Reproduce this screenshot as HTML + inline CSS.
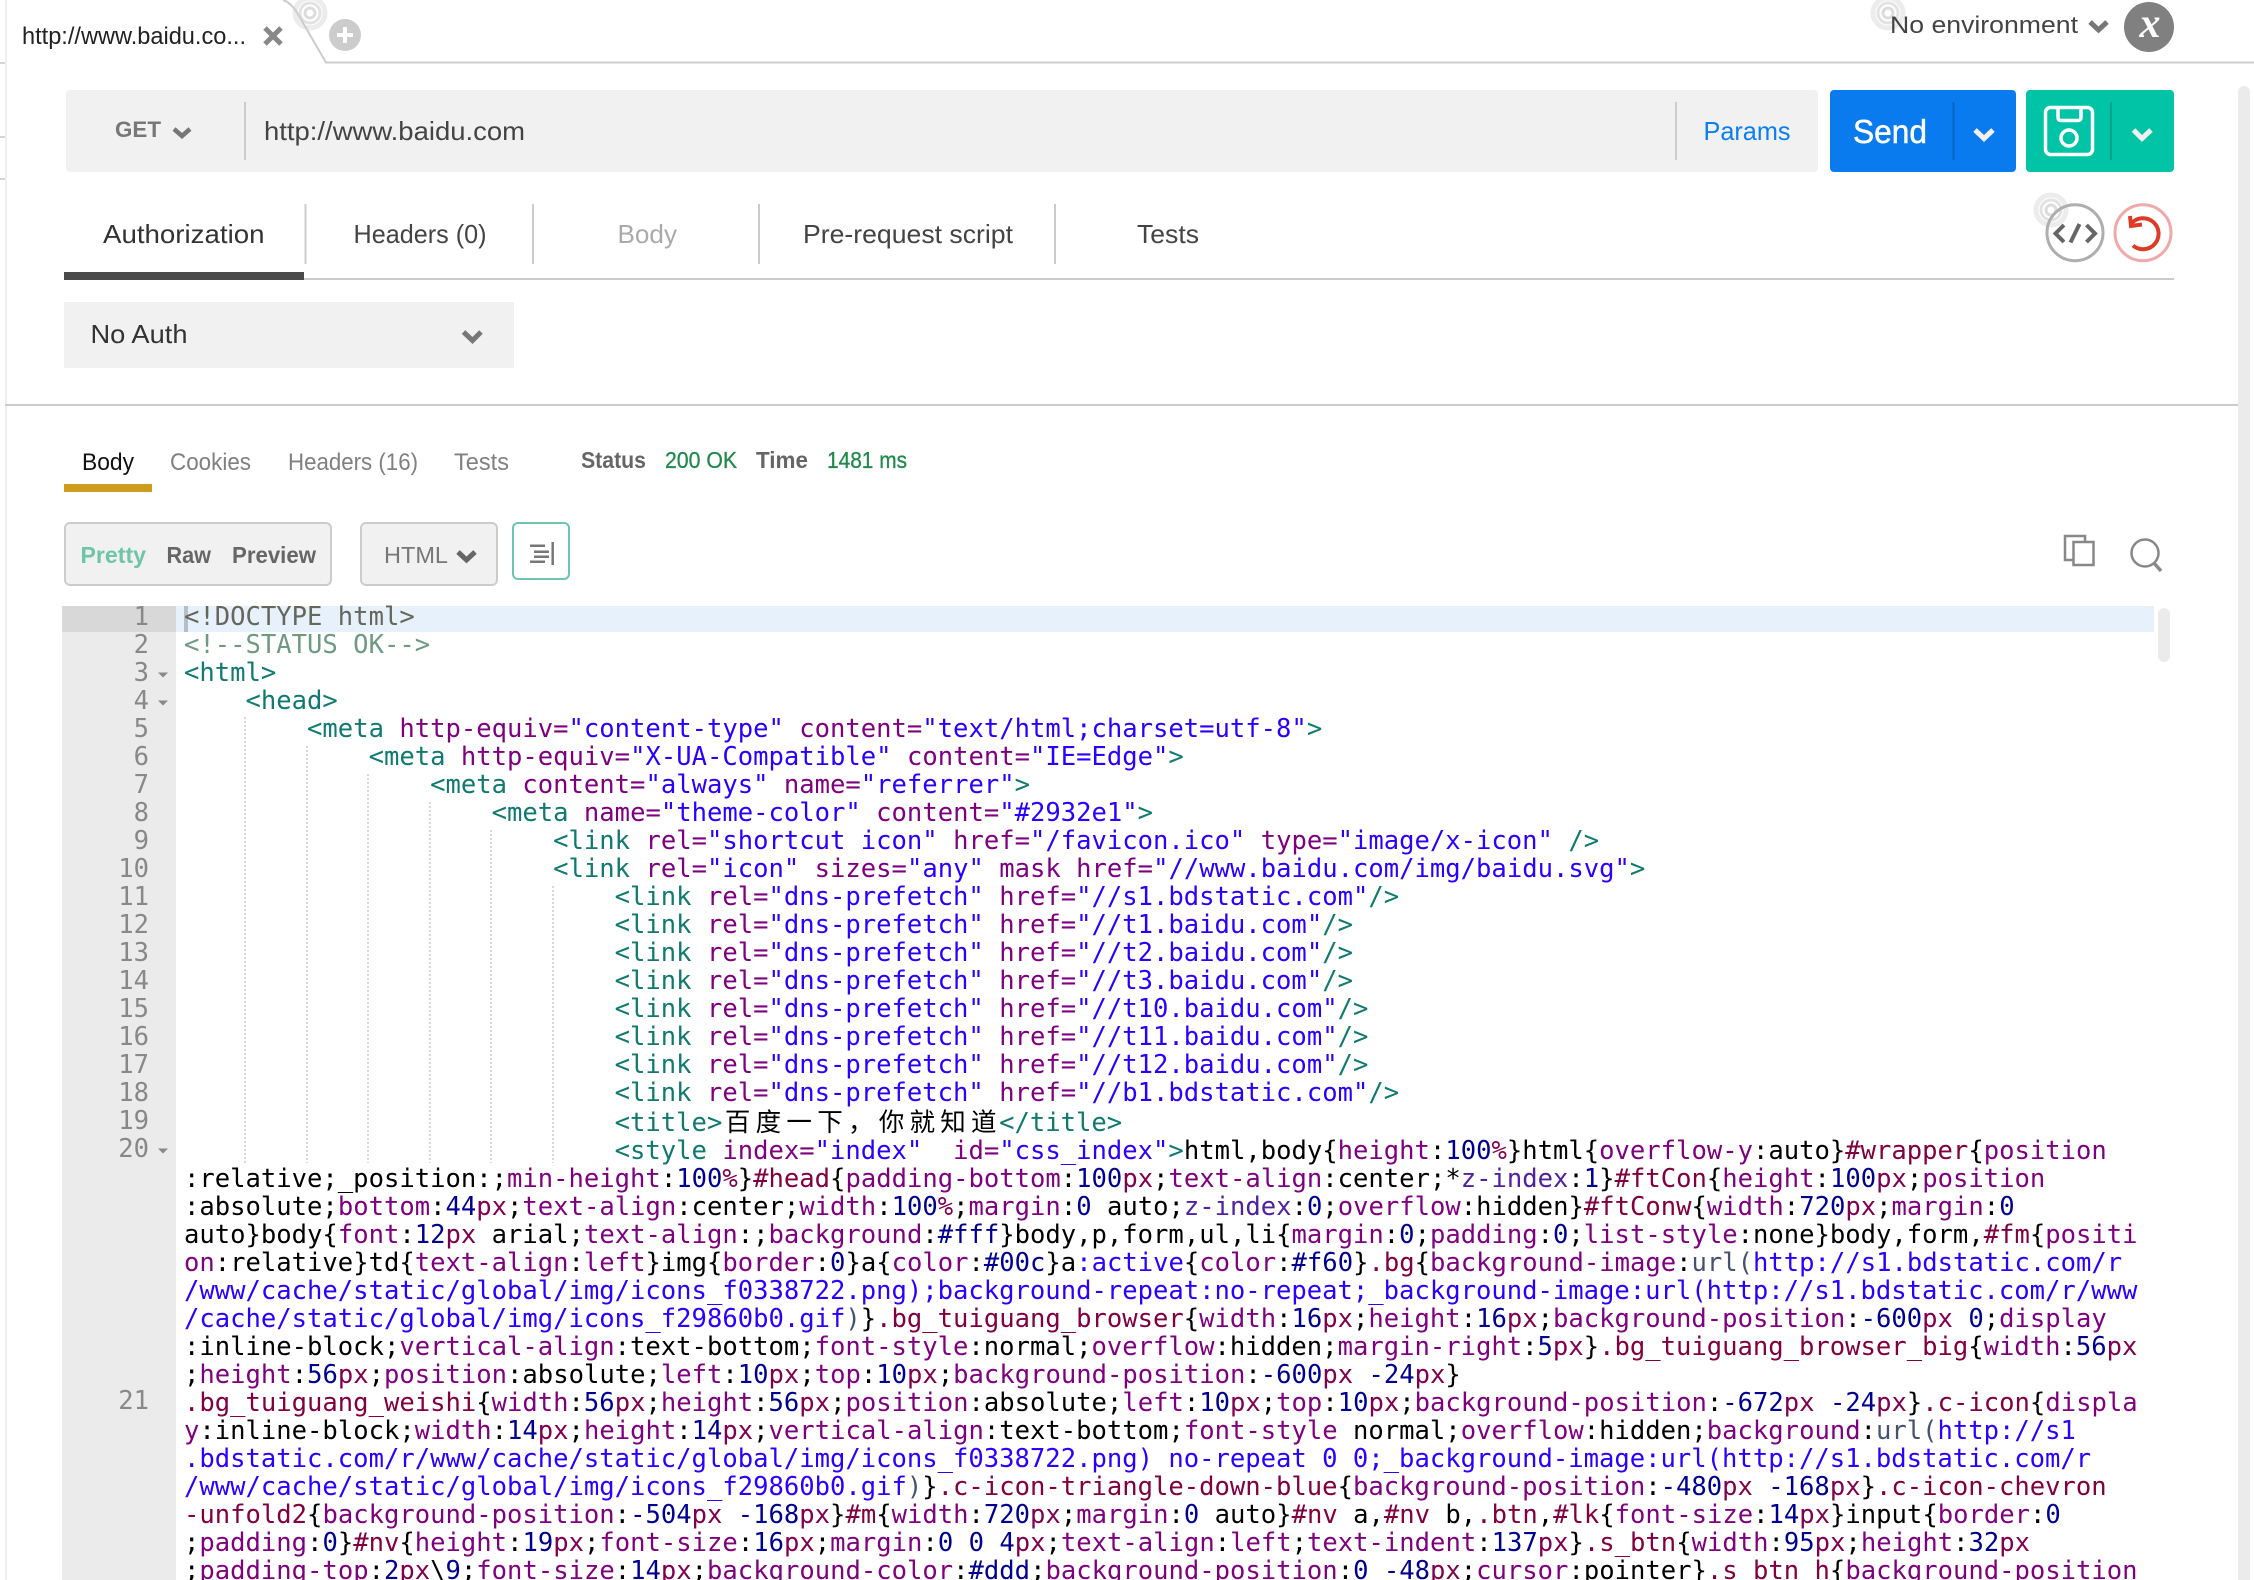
<!DOCTYPE html>
<html lang="en"><head><meta charset="utf-8"><title>Postman request</title>
<style>
html,body{margin:0;padding:0;background:#fff}
#page{position:relative;width:2254px;height:1580px;overflow:hidden;background:#fff}
#chrome{position:absolute;left:0;top:0}
#chrome text{font-family:"Liberation Sans",sans-serif}
pre{position:absolute;margin:0;font-family:"DejaVu Sans Mono","Liberation Mono",monospace;font-size:25.55px;line-height:28px;white-space:pre}
#nums{left:62px;top:603px;width:87px;text-align:right;color:#888}
#code{left:184px;top:603px;color:#000}
i{font-style:normal}
.t{color:#117a70}.a{color:#7f007f}.s{color:#2a00ff}.p{color:#7f007f}.n{color:#000090}.u{color:#800050}.e{color:#800040}.l{color:#45526e}.z{color:#5020a0}
.c{font-family:"Noto Sans CJK SC",sans-serif;letter-spacing:5.21px;margin-left:2.6px;margin-right:-2.6px}
</style></head><body><div id="page">
<svg id="chrome" width="2254" height="1580" viewBox="0 0 2254 1580" xmlns="http://www.w3.org/2000/svg">
<rect x="5" y="0" width="2" height="1580" fill="#eeeeee"/>
<g fill="#d4d4d4"><rect x="0" y="62" width="5" height="2"/><rect x="0" y="136" width="5" height="2"/><rect x="0" y="178" width="5" height="2"/></g>
<g fill="none"><circle cx="310" cy="13" r="15" stroke="#ececec" stroke-width="5"/><circle cx="310" cy="13" r="10" stroke="#e2e2e2" stroke-width="3"/><circle cx="310" cy="13" r="5" stroke="#dcdcdc" stroke-width="3"/>
<circle cx="1888" cy="13" r="15" stroke="#ececec" stroke-width="5"/><circle cx="1888" cy="13" r="10" stroke="#e2e2e2" stroke-width="3"/><circle cx="1888" cy="13" r="5" stroke="#dcdcdc" stroke-width="3"/>
<circle cx="2051" cy="210" r="15" stroke="#ececec" stroke-width="5"/><circle cx="2051" cy="210" r="10" stroke="#e2e2e2" stroke-width="3"/><circle cx="2051" cy="210" r="5" stroke="#dcdcdc" stroke-width="3"/>
<path d="M283 0Q292 3 299 16L326 62.5H2254" stroke="#cccccc" stroke-width="2"/></g>
<text x="22" y="44" font-size="24" fill="#222" textLength="224" lengthAdjust="spacingAndGlyphs">http://www.baidu.co...</text>
<path d="M265 28L281 44M281 28L265 44" stroke="#888" stroke-width="5" fill="none"/>
<circle cx="345" cy="35" r="16" fill="#cccccc"/><path d="M337 35H353M345 27V43" stroke="#fff" stroke-width="4"/>
<text x="1890" y="33" font-size="24.5" fill="#444" textLength="188" lengthAdjust="spacingAndGlyphs">No environment</text>
<path d="M2090 22L2098.500 30L2107 22" stroke="#777" stroke-width="5" fill="none"/>
<circle cx="2149" cy="27" r="25" fill="#808080"/>
<text x="2150" y="37" font-size="42" fill="#fff" text-anchor="middle" style="font-family:'Liberation Serif',serif;font-style:italic;font-weight:bold">x</text>
<rect x="2238" y="86" width="12" height="1500" rx="6" fill="#ebebeb"/>

<rect x="66" y="90" width="1752" height="82" rx="4" fill="#f1f1f1"/>
<text x="115" y="137" font-size="22.500" font-weight="bold" fill="#777" textLength="46" lengthAdjust="spacingAndGlyphs">GET</text>
<path d="M174 129L182 136L190 129" stroke="#777" stroke-width="4.500" fill="none"/>
<rect x="244" y="102" width="2" height="58" fill="#cccccc"/>
<text x="264" y="140" font-size="26" fill="#444" textLength="261" lengthAdjust="spacingAndGlyphs">http://www.baidu.com</text>
<rect x="1675" y="102" width="2" height="58" fill="#cccccc"/>
<text x="1703.500" y="140" font-size="26" fill="#0c7ef0" textLength="87" lengthAdjust="spacingAndGlyphs">Params</text>

<rect x="1830" y="90" width="186" height="82" rx="4" fill="#097bee"/>
<text x="1853" y="143" font-size="33" fill="#fff" stroke="#fff" stroke-width="0.500" textLength="74" lengthAdjust="spacingAndGlyphs">Send</text>
<rect x="1952.500" y="102" width="2" height="58" fill="#0a66c4"/>
<path d="M1975 130L1984 138.500L1993 130" stroke="#f0f0f0" stroke-width="5" fill="none"/>
<rect x="2026" y="90" width="148" height="82" rx="4" fill="#00c4a5"/>
<g fill="none" stroke="#fff" stroke-width="3.500"><rect x="2045.500" y="107.500" width="47" height="47" rx="5"/><path d="M2058 108V117Q2058 120.500 2061 120.500H2078Q2081 120.500 2081 117V108"/><circle cx="2069" cy="138" r="8"/></g>
<rect x="2110" y="102" width="2" height="58" fill="#0aa48d"/>
<path d="M2133.500 130L2142 138.500L2151 130" stroke="#f0f0f0" stroke-width="5" fill="none"/>

<text x="103" y="243" font-size="26" fill="#333" textLength="161.500" lengthAdjust="spacingAndGlyphs">Authorization</text>
<text x="353.500" y="243" font-size="26" fill="#444" textLength="133" lengthAdjust="spacingAndGlyphs">Headers (0)</text>
<text x="617.500" y="243" font-size="26" fill="#aaa" textLength="59.500" lengthAdjust="spacingAndGlyphs">Body</text>
<text x="803" y="243" font-size="26" fill="#444" textLength="210" lengthAdjust="spacingAndGlyphs">Pre-request script</text>
<text x="1137" y="243" font-size="26" fill="#444" textLength="62" lengthAdjust="spacingAndGlyphs">Tests</text>
<g fill="#cccccc"><rect x="304.500" y="204" width="2" height="60"/><rect x="532" y="204" width="2" height="60"/><rect x="758" y="204" width="2" height="60"/><rect x="1054" y="204" width="2" height="60"/><rect x="304" y="278" width="1870" height="2"/></g>
<rect x="64" y="272" width="240" height="8" fill="#4a4a4a"/>
<circle cx="2075" cy="232.700" r="28" fill="none" stroke="#aeaeae" stroke-width="3"/>
<path d="M2064 225L2055.500 233.500L2064 242M2086.500 225L2095 233.500L2086.500 242M2079.500 224L2070.500 242.500" fill="none" stroke="#666" stroke-width="4"/>
<circle cx="2143" cy="232.700" r="28" fill="none" stroke="#f0a8a8" stroke-width="3"/>
<path d="M2131 224A15.500 15.500 0 1 1 2133 245.500M2130 216L2131 226L2142 224.500" fill="none" stroke="#dc3b26" stroke-width="4"/>

<rect x="64" y="302" width="450" height="66" fill="#f1f1f1"/>
<text x="90.500" y="343" font-size="26" fill="#333" textLength="97" lengthAdjust="spacingAndGlyphs">No Auth</text>
<path d="M463.500 332L472.500 340.500L481 332" stroke="#777" stroke-width="5" fill="none"/>

<rect x="5" y="404" width="2233" height="2" fill="#cccccc"/>

<text x="82" y="470" font-size="24" fill="#111" textLength="52" lengthAdjust="spacingAndGlyphs">Body</text>
<rect x="64" y="484" width="88" height="8" fill="#ce9b1d"/>
<text x="170" y="470" font-size="24" fill="#808080" textLength="81" lengthAdjust="spacingAndGlyphs">Cookies</text>
<text x="288" y="470" font-size="24" fill="#808080" textLength="130" lengthAdjust="spacingAndGlyphs">Headers (16)</text>
<text x="454" y="470" font-size="24" fill="#808080" textLength="55" lengthAdjust="spacingAndGlyphs">Tests</text>
<text x="581" y="468" font-size="23" font-weight="bold" fill="#666" textLength="65" lengthAdjust="spacingAndGlyphs">Status</text>
<text x="665" y="468" font-size="23" fill="#1f8a4c" stroke="#1f8a4c" stroke-width="0.300" textLength="72" lengthAdjust="spacingAndGlyphs">200 OK</text>
<text x="756" y="468" font-size="23" font-weight="bold" fill="#666" textLength="52" lengthAdjust="spacingAndGlyphs">Time</text>
<text x="827" y="468" font-size="23" fill="#1f8a4c" stroke="#1f8a4c" stroke-width="0.300" textLength="80" lengthAdjust="spacingAndGlyphs">1481 ms</text>

<rect x="65" y="523" width="266" height="62" rx="5" fill="#f1f1f1" stroke="#cccccc" stroke-width="2"/>
<text x="80.500" y="563" font-size="23" font-weight="bold" fill="#6fc5a8" textLength="65.500" lengthAdjust="spacingAndGlyphs">Pretty</text>
<text x="166.500" y="563" font-size="23" font-weight="bold" fill="#666" textLength="44.500" lengthAdjust="spacingAndGlyphs">Raw</text>
<text x="232" y="563" font-size="23" font-weight="bold" fill="#666" textLength="84" lengthAdjust="spacingAndGlyphs">Preview</text>
<rect x="361" y="523" width="136" height="62" rx="5" fill="#f1f1f1" stroke="#cccccc" stroke-width="2"/>
<text x="384" y="563" font-size="23" fill="#777" textLength="64" lengthAdjust="spacingAndGlyphs">HTML</text>
<path d="M458 552L466.500 560L475 552" stroke="#666" stroke-width="5" fill="none"/>
<rect x="513" y="523" width="56" height="56" rx="5" fill="#fff" stroke="#6cc5af" stroke-width="2"/>
<path d="M530 545.700H545M534 551.700H549M534 556.700H549M530 561.700H545M552.700 542V565" stroke="#777" stroke-width="2.500" fill="none"/>
<rect x="2065" y="536" width="20" height="24" fill="#fff" stroke="#888" stroke-width="2.500"/>
<rect x="2073.500" y="542" width="20" height="23" fill="#fff" stroke="#888" stroke-width="2.500"/>
<circle cx="2145" cy="553" r="13.500" fill="none" stroke="#888" stroke-width="2.500"/>
<path d="M2154 563L2161 571" stroke="#888" stroke-width="3.500"/>

<rect x="62" y="606" width="114" height="974" fill="#ebebeb"/>
<rect x="62" y="606" width="114" height="26" fill="#d8d8d8"/>
<rect x="176" y="606" width="1978" height="26" fill="#e7f1fc"/>
<rect x="184" y="606" width="4" height="26" fill="#b4bfcc"/>
<rect x="2158" y="608" width="12" height="54" rx="6" fill="#ebebeb"/>
<g fill="#888"><path d="M158 672.500H168L163 677.500Z"/><path d="M158 700.500H168L163 705.500Z"/><path d="M158 1148.500H168L163 1153.500Z"/></g>
<g stroke="#cccccc" stroke-width="1.500" stroke-dasharray="2 2"><path d="M245 717V1163"/><path d="M307 746V1163"/><path d="M368 774V1163"/><path d="M430 802V1163"/><path d="M491 830V1163"/><path d="M553 886V1163"/></g>
</svg>
<pre id="nums">1
2
3
4
5
6
7
8
9
10
11
12
13
14
15
16
17
18
19
20








21</pre>
<pre id="code"><i style="color:#66665a">&lt;!DOCTYPE html&gt;</i>
<i style="color:#6f9a82">&lt;!--STATUS OK--&gt;</i>
<i class=t>&lt;html&gt;</i>
    <i class=t>&lt;head&gt;</i>
        <i class=t>&lt;meta</i> <i class=a>http-equiv=</i><i class=s>"content-type"</i> <i class=a>content=</i><i class=s>"text/html;charset=utf-8"</i><i class=t>&gt;</i>
            <i class=t>&lt;meta</i> <i class=a>http-equiv=</i><i class=s>"X-UA-Compatible"</i> <i class=a>content=</i><i class=s>"IE=Edge"</i><i class=t>&gt;</i>
                <i class=t>&lt;meta</i> <i class=a>content=</i><i class=s>"always"</i> <i class=a>name=</i><i class=s>"referrer"</i><i class=t>&gt;</i>
                    <i class=t>&lt;meta</i> <i class=a>name=</i><i class=s>"theme-color"</i> <i class=a>content=</i><i class=s>"#2932e1"</i><i class=t>&gt;</i>
                        <i class=t>&lt;link</i> <i class=a>rel=</i><i class=s>"shortcut icon"</i> <i class=a>href=</i><i class=s>"/favicon.ico"</i> <i class=a>type=</i><i class=s>"image/x-icon"</i> <i class=t>/&gt;</i>
                        <i class=t>&lt;link</i> <i class=a>rel=</i><i class=s>"icon"</i> <i class=a>sizes=</i><i class=s>"any"</i> <i class=a>mask href=</i><i class=s>"//www.baidu.com/img/baidu.svg"</i><i class=t>&gt;</i>
                            <i class=t>&lt;link</i> <i class=a>rel=</i><i class=s>"dns-prefetch"</i> <i class=a>href=</i><i class=s>"//s1.bdstatic.com"</i><i class=t>/&gt;</i>
                            <i class=t>&lt;link</i> <i class=a>rel=</i><i class=s>"dns-prefetch"</i> <i class=a>href=</i><i class=s>"//t1.baidu.com"</i><i class=t>/&gt;</i>
                            <i class=t>&lt;link</i> <i class=a>rel=</i><i class=s>"dns-prefetch"</i> <i class=a>href=</i><i class=s>"//t2.baidu.com"</i><i class=t>/&gt;</i>
                            <i class=t>&lt;link</i> <i class=a>rel=</i><i class=s>"dns-prefetch"</i> <i class=a>href=</i><i class=s>"//t3.baidu.com"</i><i class=t>/&gt;</i>
                            <i class=t>&lt;link</i> <i class=a>rel=</i><i class=s>"dns-prefetch"</i> <i class=a>href=</i><i class=s>"//t10.baidu.com"</i><i class=t>/&gt;</i>
                            <i class=t>&lt;link</i> <i class=a>rel=</i><i class=s>"dns-prefetch"</i> <i class=a>href=</i><i class=s>"//t11.baidu.com"</i><i class=t>/&gt;</i>
                            <i class=t>&lt;link</i> <i class=a>rel=</i><i class=s>"dns-prefetch"</i> <i class=a>href=</i><i class=s>"//t12.baidu.com"</i><i class=t>/&gt;</i>
                            <i class=t>&lt;link</i> <i class=a>rel=</i><i class=s>"dns-prefetch"</i> <i class=a>href=</i><i class=s>"//b1.bdstatic.com"</i><i class=t>/&gt;</i>
                            <i class=t>&lt;title&gt;</i><i class=c>百度一下，你就知道</i><i class=t>&lt;/title&gt;</i>
                            <i class=t>&lt;style</i> <i class=a>index=</i><i class=s>"index"</i>  <i class=a>id=</i><i class=s>"css_index"</i><i class=t>&gt;</i>html,body{<i class=p>height</i>:<i class=n>100</i><i class=u>%</i>}html{<i class=p>overflow-y</i>:auto}<i class=e>#wrapper</i>{<i class=p>position</i>
:relative;_position:;<i class=p>min-height</i>:<i class=n>100</i><i class=u>%</i>}<i class=e>#head</i>{<i class=p>padding-bottom</i>:<i class=n>100</i><i class=u>px</i>;<i class=p>text-align</i>:center;*<i class=z>z-index</i>:<i class=n>1</i>}<i class=e>#ftCon</i>{<i class=p>height</i>:<i class=n>100</i><i class=u>px</i>;<i class=p>position</i>
:absolute;<i class=p>bottom</i>:<i class=n>44</i><i class=u>px</i>;<i class=p>text-align</i>:center;<i class=p>width</i>:<i class=n>100</i><i class=u>%</i>;<i class=p>margin</i>:<i class=n>0</i> auto;<i class=z>z-index</i>:<i class=n>0</i>;<i class=p>overflow</i>:hidden}<i class=e>#ftConw</i>{<i class=p>width</i>:<i class=n>720</i><i class=u>px</i>;<i class=p>margin</i>:<i class=n>0</i>
auto}body{<i class=p>font</i>:<i class=n>12</i><i class=u>px</i> arial;<i class=p>text-align</i>:;<i class=p>background</i>:<i class=n>#fff</i>}body,p,form,ul,li{<i class=p>margin</i>:<i class=n>0</i>;<i class=p>padding</i>:<i class=n>0</i>;<i class=p>list-style</i>:none}body,form,<i class=e>#fm</i>{<i class=p>positi</i>
<i class=p>on</i>:relative}td{<i class=p>text-align</i>:<i class=p>left</i>}img{<i class=p>border</i>:<i class=n>0</i>}a{<i class=p>color</i>:<i class=n>#00c</i>}a<i class=s>:active</i>{<i class=p>color</i>:<i class=n>#f60</i>}<i class=e>.bg</i>{<i class=p>background-image</i>:<i class=l>url(</i><i class=s>http://s1.bdstatic.com/r</i>
<i class=s>/www/cache/static/global/img/icons_f0338722.png);background-repeat:no-repeat;_background-image:url(http://s1.bdstatic.com/r/www</i>
<i class=s>/cache/static/global/img/icons_f29860b0.gif</i><i class=l>)</i>}<i class=e>.bg_tuiguang_browser</i>{<i class=p>width</i>:<i class=n>16</i><i class=u>px</i>;<i class=p>height</i>:<i class=n>16</i><i class=u>px</i>;<i class=p>background-position</i>:<i class=n>-600</i><i class=u>px</i> <i class=n>0</i>;<i class=p>display</i>
:inline-block;<i class=p>vertical-align</i>:text-bottom;<i class=p>font-style</i>:normal;<i class=p>overflow</i>:hidden;<i class=p>margin-right</i>:<i class=n>5</i><i class=u>px</i>}<i class=e>.bg_tuiguang_browser_big</i>{<i class=p>width</i>:<i class=n>56</i><i class=u>px</i>
;<i class=p>height</i>:<i class=n>56</i><i class=u>px</i>;<i class=p>position</i>:absolute;<i class=p>left</i>:<i class=n>10</i><i class=u>px</i>;<i class=p>top</i>:<i class=n>10</i><i class=u>px</i>;<i class=p>background-position</i>:<i class=n>-600</i><i class=u>px</i> <i class=n>-24</i><i class=u>px</i>}
<i class=e>.bg_tuiguang_weishi</i>{<i class=p>width</i>:<i class=n>56</i><i class=u>px</i>;<i class=p>height</i>:<i class=n>56</i><i class=u>px</i>;<i class=p>position</i>:absolute;<i class=p>left</i>:<i class=n>10</i><i class=u>px</i>;<i class=p>top</i>:<i class=n>10</i><i class=u>px</i>;<i class=p>background-position</i>:<i class=n>-672</i><i class=u>px</i> <i class=n>-24</i><i class=u>px</i>}<i class=e>.c-icon</i>{<i class=p>displa</i>
<i class=p>y</i>:inline-block;<i class=p>width</i>:<i class=n>14</i><i class=u>px</i>;<i class=p>height</i>:<i class=n>14</i><i class=u>px</i>;<i class=p>vertical-align</i>:text-bottom;<i class=p>font-style</i> normal;<i class=p>overflow</i>:hidden;<i class=p>background</i>:<i class=l>url(</i><i class=s>http://s1</i>
<i class=s>.bdstatic.com/r/www/cache/static/global/img/icons_f0338722.png) no-repeat 0 0;_background-image:url(http://s1.bdstatic.com/r</i>
<i class=s>/www/cache/static/global/img/icons_f29860b0.gif</i><i class=l>)</i>}<i class=e>.c-icon-triangle-down-blue</i>{<i class=p>background-position</i>:<i class=n>-480</i><i class=u>px</i> <i class=n>-168</i><i class=u>px</i>}<i class=e>.c-icon-chevron</i>
<i class=e>-unfold2</i>{<i class=p>background-position</i>:<i class=n>-504</i><i class=u>px</i> <i class=n>-168</i><i class=u>px</i>}<i class=e>#m</i>{<i class=p>width</i>:<i class=n>720</i><i class=u>px</i>;<i class=p>margin</i>:<i class=n>0</i> auto}<i class=e>#nv</i> a,<i class=e>#nv</i> b,<i class=e>.btn</i>,<i class=e>#lk</i>{<i class=p>font-size</i>:<i class=n>14</i><i class=u>px</i>}input{<i class=p>border</i>:<i class=n>0</i>
;<i class=p>padding</i>:<i class=n>0</i>}<i class=e>#nv</i>{<i class=p>height</i>:<i class=n>19</i><i class=u>px</i>;<i class=p>font-size</i>:<i class=n>16</i><i class=u>px</i>;<i class=p>margin</i>:<i class=n>0 0 4</i><i class=u>px</i>;<i class=p>text-align</i>:<i class=p>left</i>;<i class=p>text-indent</i>:<i class=n>137</i><i class=u>px</i>}<i class=e>.s_btn</i>{<i class=p>width</i>:<i class=n>95</i><i class=u>px</i>;<i class=p>height</i>:<i class=n>32</i><i class=u>px</i>
;<i class=p>padding-top</i>:<i class=n>2</i><i class=u>px</i>\<i class=n>9</i>;<i class=p>font-size</i>:<i class=n>14</i><i class=u>px</i>;<i class=p>background-color</i>:<i class=n>#ddd</i>;<i class=p>background-position</i>:<i class=n>0 -48</i><i class=u>px</i>;<i class=p>cursor</i>:pointer}<i class=e>.s_btn_h</i>{<i class=p>background-position</i></pre>
</div></body></html>
